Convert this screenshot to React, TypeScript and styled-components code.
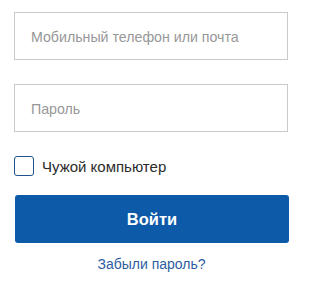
import React from "react";
import styled, { createGlobalStyle } from "styled-components";

const Global = createGlobalStyle`
  html, body { margin: 0; padding: 0; background: #fff; }
  body { font-family: "Liberation Sans", Arial, sans-serif; }
`;

const Form = styled.form`
  width: 308px;
  box-sizing: border-box;
  padding: 12px 20px 0 14px;
  display: flex;
  flex-direction: column;
`;

const Input = styled.input<{ $mb: number }>`
  box-sizing: border-box;
  width: 274px;
  height: 48px;
  border: 1px solid #cacaca;
  border-radius: 0;
  padding: 1px 16px 0;
  font-family: "Liberation Sans", Arial, sans-serif;
  font-size: 14.2px;
  color: #333;
  outline: none;
  margin-bottom: ${(p) => p.$mb}px;
  &::placeholder { color: #979797; }
`;

const CheckRow = styled.label`
  display: flex;
  align-items: center;
  gap: 8px;
  height: 20px;
  font-size: 15px;
  color: #2b2b2b;
  margin-bottom: 19px;
`;

const Box = styled.span`
  box-sizing: border-box;
  width: 20px;
  height: 20px;
  border: 1.5px solid #1f5291;
  border-radius: 3px;
`;

const Button = styled.button`
  box-sizing: border-box;
  margin-left: 1px;
  width: 274px;
  height: 48px;
  border: none;
  border-radius: 3px;
  background: #0d5aa8;
  color: #fff;
  font-family: "Liberation Sans", Arial, sans-serif;
  font-weight: bold;
  font-size: 16.5px;
  margin-bottom: 13px;
`;

const Link = styled.a`
  align-self: center;
  margin-left: 1px;
  font-size: 14px;
  color: #2c5d9f;
  text-decoration: none;
`;

export default function App() {
  return (
    <>
      <Global />
      <Form onSubmit={(e) => e.preventDefault()}>
        <Input $mb={24} placeholder="Мобильный телефон или почта" />
        <Input $mb={24} type="password" placeholder="Пароль" />
        <CheckRow>
          <Box />
          Чужой компьютер
        </CheckRow>
        <Button type="submit">Войти</Button>
        <Link href="#">Забыли пароль?</Link>
      </Form>
    </>
  );
}
